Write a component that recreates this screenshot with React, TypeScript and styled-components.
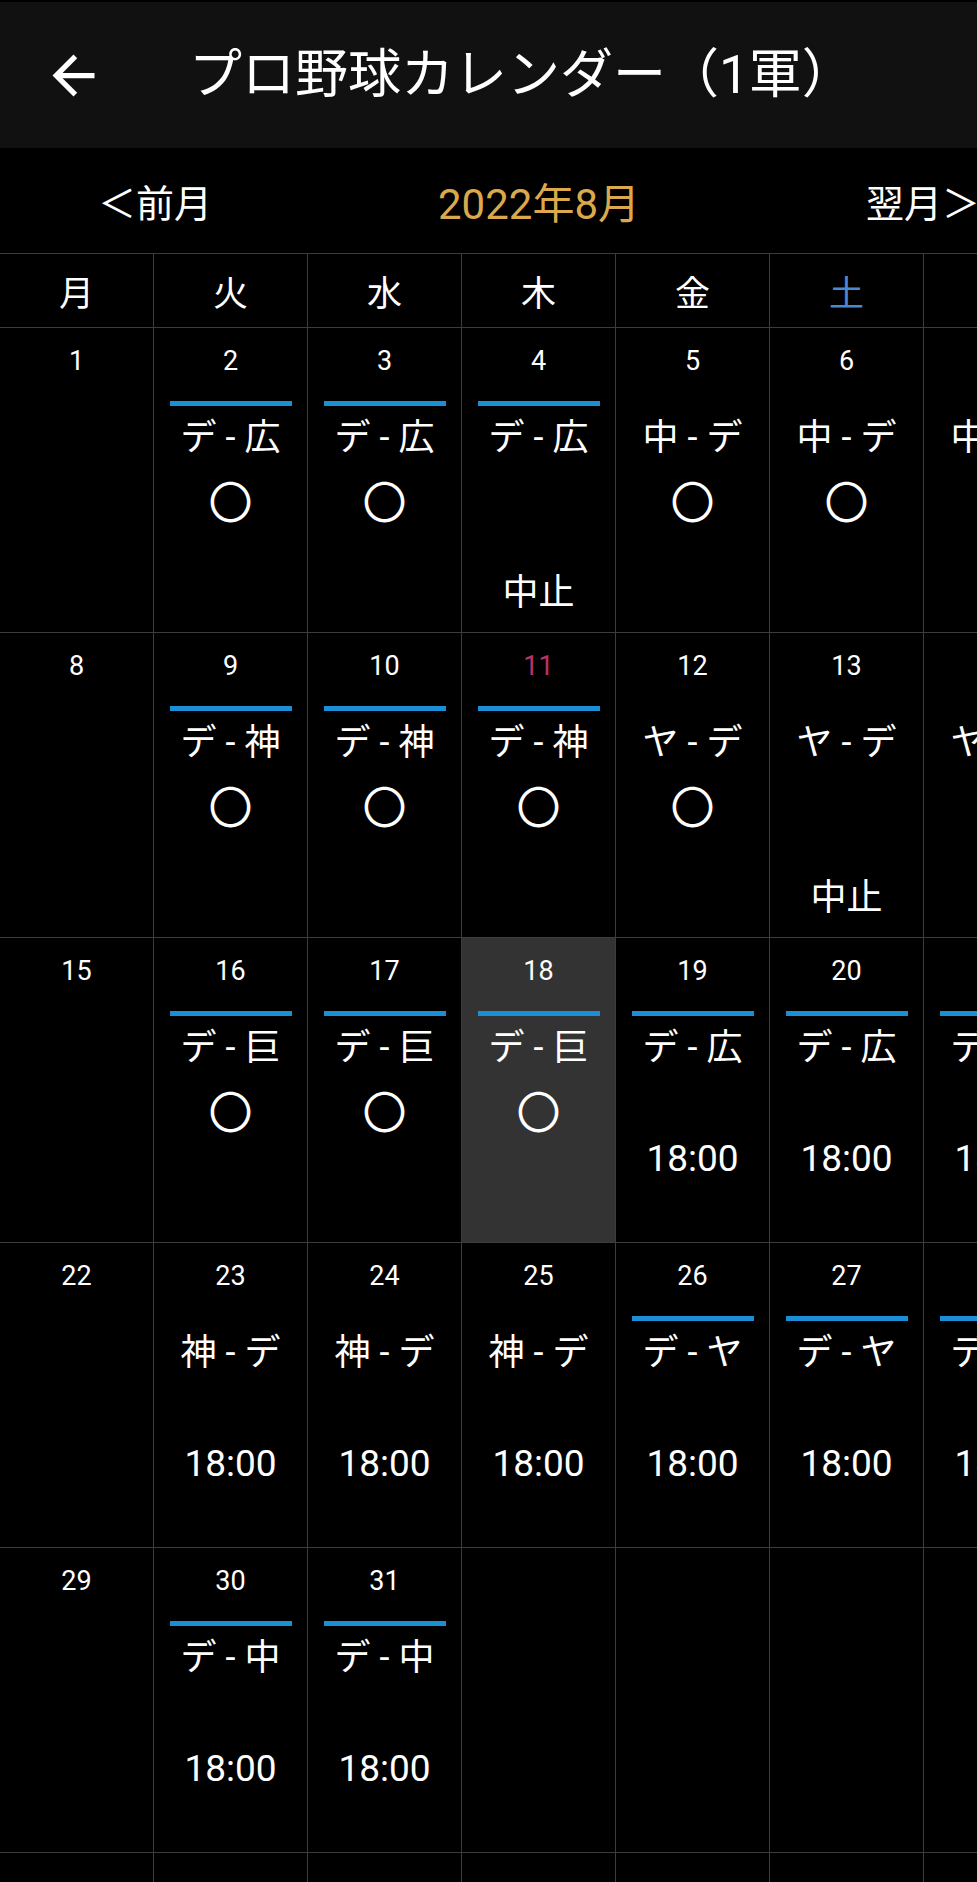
import styled, { createGlobalStyle } from 'styled-components';

const GlobalStyle = createGlobalStyle`
    html, body {
        margin: 0;
        padding: 0;
        background: #000;
        overflow-x: hidden;
    }

    body {
        font-family: Roboto, 'Noto Sans CJK JP', sans-serif;
        color: #fff;
    }
`;

const Page = styled.div`
    width: 1078px;
    background: #000;
`;

const TitleBar = styled.header`
    height: 146px;
    border-top: 2px solid #000;
    background: #111;
    display: flex;
    align-items: center;
    padding-left: 42px;
`;

const BackButton = styled.button`
    width: 63px;
    height: 63px;
    padding: 0;
    border: none;
    background: none;
    color: #fff;
    display: flex;
    align-items: center;
    justify-content: center;

    svg {
        width: 63px;
        height: 63px;
    }
`;

const Title = styled.h1`
    margin: 0 0 0 84px;
    font-size: 53px;
    font-weight: 400;
    line-height: 1;
    color: #fff;
`;

const MonthNav = styled.nav`
    height: 105px;
    display: flex;
    align-items: center;
    justify-content: space-between;
    padding: 0 98px;
`;

const NavLink = styled.span`
    font-size: 38px;
    color: #fff;
`;

const MonthLabel = styled.span`
    font-size: 42px;
    color: #dba94c;
`;

const Grid = styled.div`
    display: grid;
    grid-template-columns: repeat(7, 153px);
    grid-template-rows: 73px;
    grid-auto-rows: 304px;
    gap: 1px;
    background: #3c3c3c;
    border-top: 1px solid #3c3c3c;
`;

const WeekdayCell = styled.div<{ $color: string }>`
    background: #000;
    display: flex;
    align-items: center;
    justify-content: center;
    font-size: 35px;
    color: ${({ $color }) => $color};
`;

const DayCell = styled.div<{ $today?: boolean }>`
    background: ${({ $today }) => ($today ? '#333' : '#000')};
    display: flex;
    flex-direction: column;
    align-items: center;
`;

const DayNumber = styled.div<{ $holiday?: boolean }>`
    height: 66px;
    line-height: 66px;
    font-size: 27px;
    color: ${({ $holiday }) => ($holiday ? '#b8336c' : '#fff')};
`;

const GameBar = styled.div<{ $home?: boolean }>`
    width: 122px;
    height: 5px;
    margin-top: 7px;
    background: ${({ $home }) => ($home ? '#1a8fd6' : 'transparent')};
`;

const Matchup = styled.div`
    margin-top: 10px;
    height: 44px;
    line-height: 44px;
    font-size: 36px;
    white-space: nowrap;
`;

const Result = styled.div`
    margin-top: 22px;
    height: 44px;
    line-height: 44px;
    font-size: 44px;
`;

const StartTime = styled.div`
    margin-top: 3px;
    height: 40px;
    line-height: 40px;
    font-size: 37px;
`;

const Remark = styled.div`
    margin-top: 3px;
    height: 42px;
    line-height: 42px;
    font-size: 36px;
`;

type Game = {
    match: string;
    home?: boolean;
    result?: string;
    time?: string;
    note?: string;
};

type Day = {
    date?: number;
    holiday?: boolean;
    today?: boolean;
    game?: Game;
};

const weekdays = [
    { label: '月', color: '#fff' },
    { label: '火', color: '#fff' },
    { label: '水', color: '#fff' },
    { label: '木', color: '#fff' },
    { label: '金', color: '#fff' },
    { label: '土', color: '#4a88d2' },
    { label: '日', color: '#d24a4a' },
];

const win = '〇';

const weeks: Day[][] = [
    [
        { date: 1 },
        { date: 2, game: { match: 'デ - 広', home: true, result: win } },
        { date: 3, game: { match: 'デ - 広', home: true, result: win } },
        { date: 4, game: { match: 'デ - 広', home: true, note: '中止' } },
        { date: 5, game: { match: '中 - デ', result: win } },
        { date: 6, game: { match: '中 - デ', result: win } },
        { date: 7, game: { match: '中 - デ', result: win } },
    ],
    [
        { date: 8 },
        { date: 9, game: { match: 'デ - 神', home: true, result: win } },
        { date: 10, game: { match: 'デ - 神', home: true, result: win } },
        { date: 11, holiday: true, game: { match: 'デ - 神', home: true, result: win } },
        { date: 12, game: { match: 'ヤ - デ', result: win } },
        { date: 13, game: { match: 'ヤ - デ', note: '中止' } },
        { date: 14, game: { match: 'ヤ - デ', result: win } },
    ],
    [
        { date: 15 },
        { date: 16, game: { match: 'デ - 巨', home: true, result: win } },
        { date: 17, game: { match: 'デ - 巨', home: true, result: win } },
        { date: 18, today: true, game: { match: 'デ - 巨', home: true, result: win } },
        { date: 19, game: { match: 'デ - 広', home: true, time: '18:00' } },
        { date: 20, game: { match: 'デ - 広', home: true, time: '18:00' } },
        { date: 21, game: { match: 'デ - 広', home: true, time: '18:00' } },
    ],
    [
        { date: 22 },
        { date: 23, game: { match: '神 - デ', time: '18:00' } },
        { date: 24, game: { match: '神 - デ', time: '18:00' } },
        { date: 25, game: { match: '神 - デ', time: '18:00' } },
        { date: 26, game: { match: 'デ - ヤ', home: true, time: '18:00' } },
        { date: 27, game: { match: 'デ - ヤ', home: true, time: '18:00' } },
        { date: 28, game: { match: 'デ - ヤ', home: true, time: '18:00' } },
    ],
    [
        { date: 29 },
        { date: 30, game: { match: 'デ - 中', home: true, time: '18:00' } },
        { date: 31, game: { match: 'デ - 中', home: true, time: '18:00' } },
        {},
        {},
        {},
        {},
    ],
    [{}, {}, {}, {}, {}, {}, {}],
];

const ArrowBack = () => (
    <svg viewBox="0 0 24 24" fill="currentColor" aria-hidden="true">
        <path d="M20 11H7.83l5.59-5.59L12 4l-8 8 8 8 1.41-1.41L7.83 13H20v-2z" />
    </svg>
);

const CalendarDay = ({ day }: { day: Day }) => (
    <DayCell $today={day.today}>
        {day.date !== undefined && <DayNumber $holiday={day.holiday}>{day.date}</DayNumber>}
        {day.game && (
            <>
                <GameBar $home={day.game.home} />
                <Matchup>{day.game.match}</Matchup>
                <Result>{day.game.result}</Result>
                <StartTime>{day.game.time}</StartTime>
                <Remark>{day.game.note}</Remark>
            </>
        )}
    </DayCell>
);

const App = () => (
    <>
        <GlobalStyle />
        <Page>
            <TitleBar>
                <BackButton aria-label="戻る">
                    <ArrowBack />
                </BackButton>
                <Title>プロ野球カレンダー（1軍）</Title>
            </TitleBar>

            <MonthNav>
                <NavLink>＜前月</NavLink>
                <MonthLabel>2022年8月</MonthLabel>
                <NavLink>翌月＞</NavLink>
            </MonthNav>

            <Grid>
                {weekdays.map(w => (
                    <WeekdayCell key={w.label} $color={w.color}>
                        {w.label}
                    </WeekdayCell>
                ))}
                {weeks.map((week, i) =>
                    week.map((day, j) => <CalendarDay key={`${i}-${j}`} day={day} />)
                )}
            </Grid>
        </Page>
    </>
);

export default App;
